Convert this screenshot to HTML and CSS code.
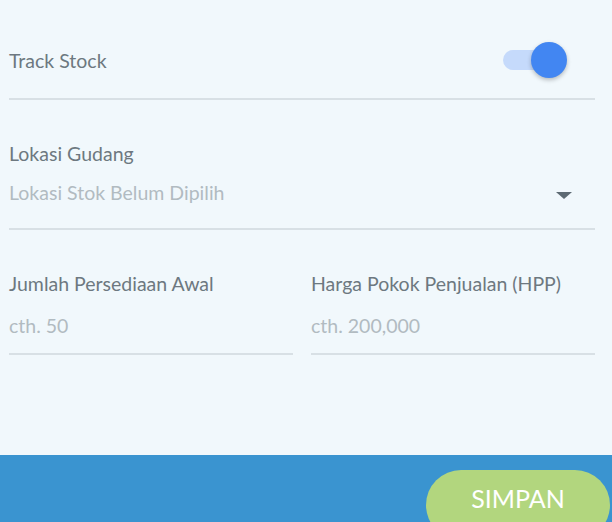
FILE: index.html
```html
<!DOCTYPE html>
<html>
<head>
<meta charset="utf-8">
<link rel="stylesheet" href="styles.css">
</head>
<body>
<div class="page">
  <div class="form">
    <div class="row toggle-row">
      <span class="label">Track Stock</span>
      <div class="switch"><div class="track"></div><div class="knob"></div></div>
    </div>
    <div class="field select-field">
      <div class="label">Lokasi Gudang</div>
      <div class="select">
        <span class="placeholder">Lokasi Stok Belum Dipilih</span>
        <span class="caret"></span>
      </div>
    </div>
    <div class="cols">
      <div class="field col">
        <div class="label">Jumlah Persediaan Awal</div>
        <div class="placeholder input">cth. 50</div>
      </div>
      <div class="field col">
        <div class="label">Harga Pokok Penjualan (HPP)</div>
        <div class="placeholder input">cth. 200,000</div>
      </div>
    </div>
  </div>
  <div class="footer">
    <button class="save">SIMPAN</button>
  </div>
</div>
</body>
</html>
```
FILE: styles.css
```css
html, body {
  margin: 0;
  padding: 0;
  background: #f1f8fc;
  font-family: Lato, "Liberation Sans", sans-serif;
}
.page {
  width: 612px;
  height: 522px;
  display: flex;
  flex-direction: column;
  overflow: hidden;
}
.form {
  flex: 1;
  padding: 0 17px 0 9px;
}
.label {
  font-size: 19.5px;
  color: #6d7880;
}
.placeholder {
  font-size: 19.5px;
  color: #b1bbc1;
}
.row {
  display: flex;
  align-items: center;
  justify-content: space-between;
}
.toggle-row {
  height: 100px;
  padding-top: 22px;
  box-sizing: border-box;
  border-bottom: 2px solid #d8e0e5;
}
.switch {
  position: relative;
  width: 64px;
  height: 38px;
  margin-right: 28px;
}
.track {
  position: absolute;
  left: 0;
  top: 9px;
  width: 56px;
  height: 20px;
  border-radius: 10px;
  background: #c5dafb;
}
.knob {
  position: absolute;
  right: 0;
  top: 1px;
  width: 36px;
  height: 36px;
  border-radius: 50%;
  background: #4286f2;
  box-shadow: 0 2px 4px rgba(0,0,0,0.25);
}
.select-field {
  padding-top: 42px;
  border-bottom: 2px solid #d8e0e5;
  height: 130px;
  box-sizing: border-box;
}
.select {
  display: flex;
  justify-content: space-between;
  align-items: center;
  margin-top: 16px;
}
.caret {
  width: 0;
  height: 0;
  border-left: 8px solid transparent;
  border-right: 8px solid transparent;
  border-top: 7px solid #5d6a73;
  margin-right: 23px;
  margin-top: 6px;
}
.cols {
  display: flex;
  gap: 18px;
}
.col {
  flex: 1;
  padding-top: 42px;
  height: 125px;
  box-sizing: border-box;
  border-bottom: 2px solid #d8e0e5;
}
.input {
  margin-top: 19px;
}
.footer {
  height: 67px;
  background: #3a94d0;
  display: flex;
  justify-content: flex-end;
  align-items: flex-start;
  padding-top: 15px;
  box-sizing: border-box;
}
.save {
  width: 184px;
  height: 70px;
  border: none;
  border-radius: 35px;
  background: #b2d67e;
  color: #ffffff;
  font-family: Lato, "Liberation Sans", sans-serif;
  font-size: 25px;
  padding: 0 0 14px 0;
  margin-right: 2px;
}
```
